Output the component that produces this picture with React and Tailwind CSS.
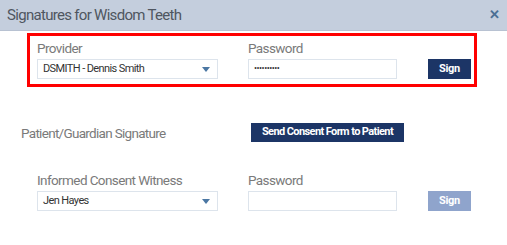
import React from "react";

function Select({ value }) {
  return (
    <div className="flex h-[20px] w-[181px] items-center justify-between border border-[#dde4ec] bg-white pl-[5px] pr-[7px]">
      <span className="text-[11px] tracking-[-0.6px] text-[#333]">{value}</span>
      <svg width="8" height="5" viewBox="0 0 8 5"><path d="M0 0H8L4 5Z" fill="#4b77a3" /></svg>
    </div>
  );
}

function Field({ label, children, className = "" }) {
  return (
    <div className={"flex flex-col " + className}>
      <div className="h-[16px] text-[13.5px] leading-[16px] tracking-[-0.6px] text-[#7a7a7a]">{label}</div>
      <div className="mt-[3px]">{children}</div>
    </div>
  );
}

function SignRow({ label1, value, pw, disabled }) {
  return (
    <div className="flex items-end">
      <Field label={label1} className="w-[211px]">
        <Select value={value} />
      </Field>
      <Field label="Password" className="w-[180px]">
        <div className="flex h-[20px] w-[149px] items-center border border-[#dde4ec] bg-white pl-[5px]">
          {pw && <span className="text-[9px] tracking-[-0.5px] text-[#333]">••••••••••</span>}
        </div>
      </Field>
      <button
        className={
          "h-[20px] w-[43px] text-[11px] font-bold tracking-[-0.3px] text-white " +
          (disabled ? "bg-[#8fa4cc]" : "bg-[#1c3566]")
        }
      >
        Sign
      </button>
    </div>
  );
}

export default function App() {
  return (
    <div className="h-[245px] w-[507px] bg-white" style={{ fontFamily: "Roboto, 'Liberation Sans', sans-serif" }}>
      <div className="flex h-[31px] items-center justify-between border-b border-[#b8c2d2] bg-[#c4cedd] pl-[7px] pr-[7px]">
        <span className="text-[15px] tracking-[-0.7px] text-[#4f5660]">Signatures for Wisdom Teeth</span>
        <span className="text-[13px] font-bold text-[#4b6f94]">✕</span>
      </div>
      <div className="ml-[27px] mt-[2px] h-[54px] w-[450px] border-[3px] border-[#ff0000] pl-[7px] pt-[4px]">
        <SignRow label1="Provider" value="DSMITH - Dennis Smith" pw />
      </div>
      <div className="mt-[36px] flex items-center pl-[21px]">
        <span className="w-[230px] text-[13.5px] leading-[16px] tracking-[-0.7px] text-[#7a7a7a]">Patient/Guardian Signature</span>
        <button className="h-[19px] w-[153px] bg-[#1c3566] text-[11px] font-bold tracking-[-0.6px] text-white">Send Consent Form to Patient</button>
      </div>
      <div className="mt-[30px] pl-[37px]">
        <SignRow label1="Informed Consent Witness" value="Jen Hayes" disabled />
      </div>
    </div>
  );
}
